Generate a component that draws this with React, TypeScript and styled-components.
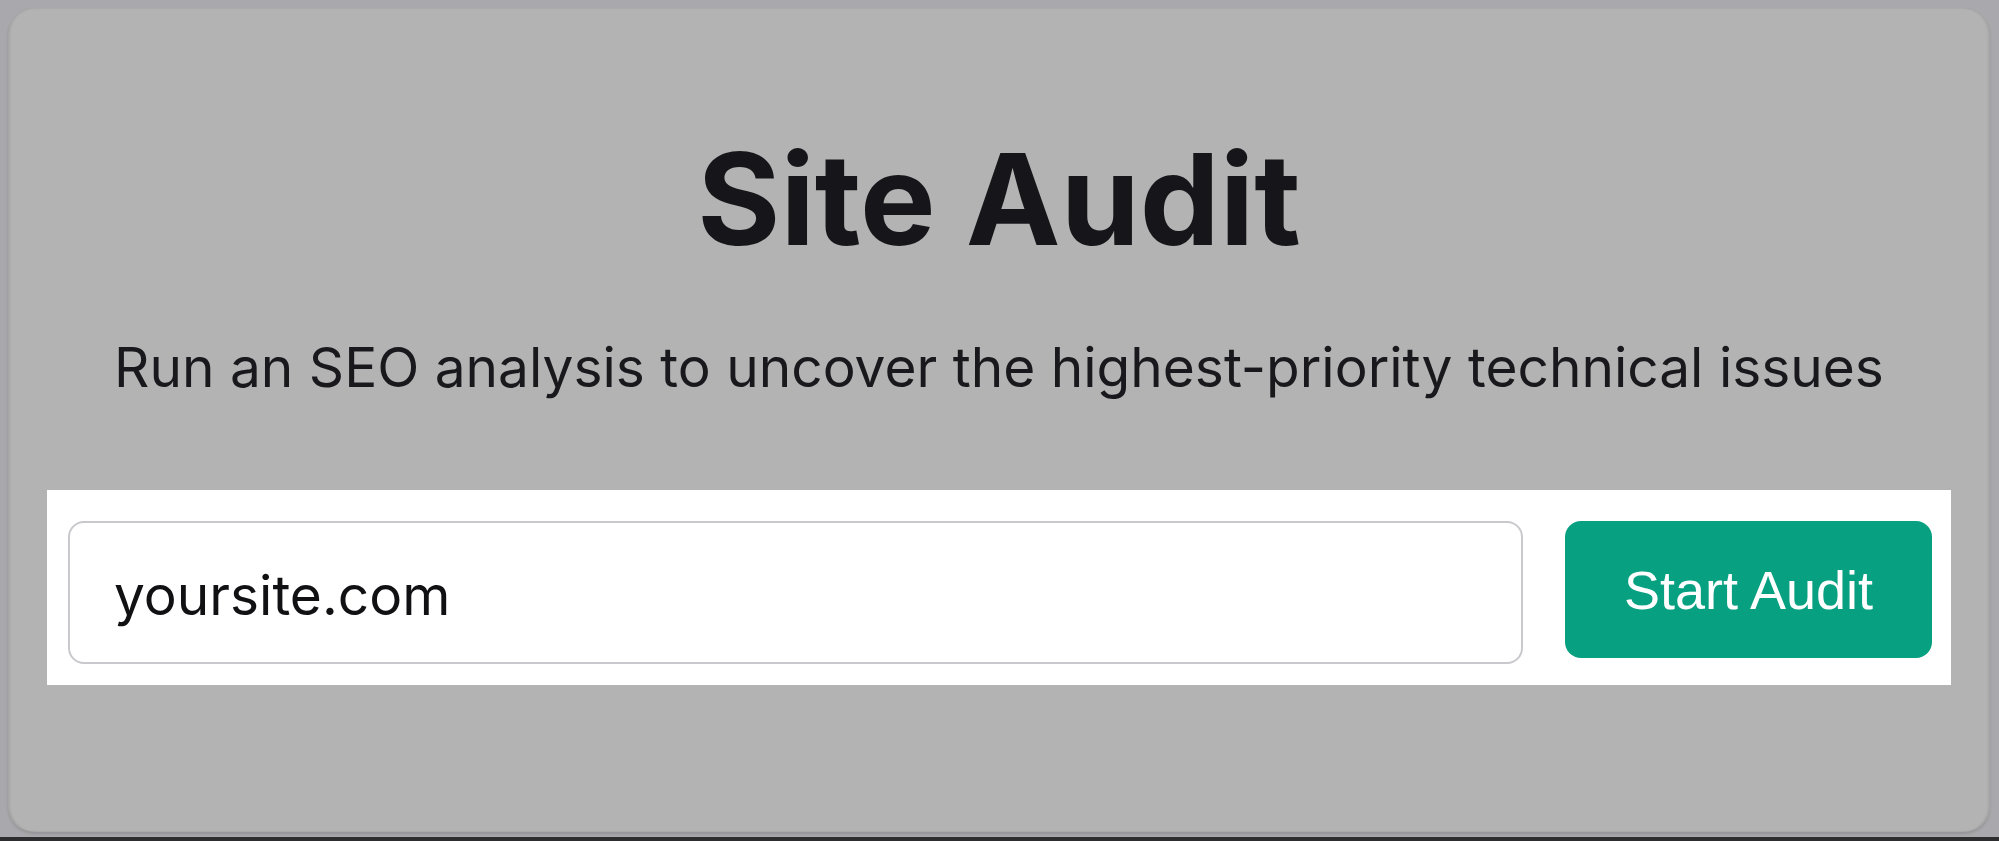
import React from "react";
import styled, { createGlobalStyle } from "styled-components";

const GlobalStyle = createGlobalStyle`
    html, body {
        margin: 0;
        padding: 0;
        background: #a9a9ad;
    }
    * {
        box-sizing: border-box;
    }
`;

const Page = styled.div`
    height: 841px;
    display: flex;
    flex-direction: column;
    padding: 8px 9px 0 8px;
    overflow: hidden;
`;

const Card = styled.section`
    height: 824px;
    background: #b3b3b3;
    border-radius: 26px;
    box-shadow: inset 2px 0 2px rgba(0, 0, 0, 0.08), inset -2px 0 2px rgba(0, 0, 0, 0.08),
        0 2px 3px rgba(0, 0, 0, 0.12);
    display: flex;
    flex-direction: column;
    align-items: center;
    padding-top: 128px;
`;

const BottomEdge = styled.div`
    margin-top: auto;
    height: 4px;
    margin-left: -8px;
    margin-right: -9px;
    background: #2d2d30;
`;

const Title = styled.h1`
    margin: 0;
    font-family: Inter, "Liberation Sans", sans-serif;
    font-weight: 700;
    font-size: 127px;
    line-height: 1;
    color: #16161a;
`;

const Subtitle = styled.p`
    margin: 77px 0 0;
    font-family: Inter, "Liberation Sans", sans-serif;
    font-weight: 400;
    font-size: 55px;
    line-height: 1;
    color: #19191d;
`;

const SearchBand = styled.div`
    margin-top: 95px;
    width: 1904px;
    height: 195px;
    background: #ffffff;
    display: flex;
    align-items: flex-start;
    gap: 42px;
    padding: 31px 19px 0 21px;
`;

const Field = styled.div`
    flex: 1;
    height: 143px;
    border: 2px solid #c9c9cd;
    border-radius: 16px;
    background: #ffffff;
    display: flex;
    align-items: center;
    padding-left: 44px;
    padding-top: 4px;
    font-family: Inter, "Liberation Sans", sans-serif;
    font-size: 55px;
    color: #111114;
`;

const StartButton = styled.button`
    width: 367px;
    height: 137px;
    border: none;
    border-radius: 16px;
    background: #07a081;
    color: #ffffff;
    font-family: "Liberation Sans", Arial, sans-serif;
    font-size: 54px;
    cursor: pointer;
    padding: 0;
`;

const App = () => {
    return (
        <>
            <GlobalStyle />
            <Page>
                <Card>
                    <Title>Site Audit</Title>
                    <Subtitle>Run an SEO analysis to uncover the highest-priority technical issues</Subtitle>
                    <SearchBand>
                        <Field>yoursite.com</Field>
                        <StartButton>Start Audit</StartButton>
                    </SearchBand>
                </Card>
                <BottomEdge />
            </Page>
        </>
    );
};

export default App;
